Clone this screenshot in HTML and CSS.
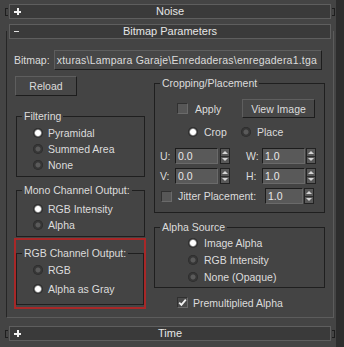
FILE: index.html
```html
<!DOCTYPE html>
<html lang="en">
<head>
    <meta charset="UTF-8">
    <meta name="viewport" content="width=device-width, initial-scale=1.0">
    <title>Bitmap Parameters</title>
    <link rel="stylesheet" href="styles.css">
</head>
<body>
    <div class="panel">
        <div class="rollup">
            <span class="bracket"></span>
            <div class="bar"><span class="sign plus"></span><span>Noise</span></div>
            <span class="bracket right"></span>
        </div>

        <div class="rollout">
            <div class="bar"><span class="sign minus"></span><span>Bitmap Parameters</span></div>
            <div class="frame">
                <div class="bitmap-row">
                    <span class="bitmap-label">Bitmap:</span>
                    <button class="btn path-btn"><span>xturas\Lampara Garaje\Enredaderas\enregadera1.tga</span></button>
                </div>

                <div class="columns">
                    <div class="col-left">
                        <button class="btn reload">Reload</button>

                        <fieldset class="group filtering">
                            <legend>Filtering</legend>
                            <label class="radio-row"><span class="radio on"></span>Pyramidal</label>
                            <label class="radio-row"><span class="radio"></span>Summed Area</label>
                            <label class="radio-row"><span class="radio"></span>None</label>
                        </fieldset>

                        <fieldset class="group mono">
                            <legend>Mono Channel Output:</legend>
                            <label class="radio-row"><span class="radio on"></span>RGB Intensity</label>
                            <label class="radio-row"><span class="radio"></span>Alpha</label>
                        </fieldset>

                        <div class="highlight">
                            <fieldset class="group rgb">
                                <legend>RGB Channel Output:</legend>
                                <label class="radio-row"><span class="radio"></span>RGB</label>
                                <label class="radio-row"><span class="radio on"></span>Alpha as Gray</label>
                            </fieldset>
                        </div>
                    </div>

                    <div class="col-right">
                        <fieldset class="group cropping">
                            <legend>Cropping/Placement</legend>
                            <div class="crop-row apply-row">
                                <label class="apply-label"><span class="check"></span>Apply</label>
                                <button class="btn view">View Image</button>
                            </div>
                            <div class="crop-row mode-row">
                                <label><span class="radio on"></span>Crop</label>
                                <label><span class="radio"></span>Place</label>
                            </div>
                            <div class="crop-row spin-row">
                                <span class="axis">U:</span>
                                <span class="field">0.0</span>
                                <span class="spin"><i class="up"></i><i class="down"></i></span>
                                <span class="axis wide">W:</span>
                                <span class="field">1.0</span>
                                <span class="spin tight"><i class="up"></i><i class="down"></i></span>
                            </div>
                            <div class="crop-row spin-row second">
                                <span class="axis">V:</span>
                                <span class="field">0.0</span>
                                <span class="spin"><i class="up"></i><i class="down"></i></span>
                                <span class="axis wide">H:</span>
                                <span class="field">1.0</span>
                                <span class="spin tight"><i class="up"></i><i class="down"></i></span>
                            </div>
                            <div class="crop-row jitter-row">
                                <span class="check"></span>
                                <span class="jitter-text">Jitter Placement:</span>
                                <span class="field short">1.0</span>
                                <span class="spin tight"><i class="up"></i><i class="down"></i></span>
                            </div>
                        </fieldset>

                        <fieldset class="group alpha">
                            <legend>Alpha Source</legend>
                            <label class="radio-row"><span class="radio on"></span>Image Alpha</label>
                            <label class="radio-row"><span class="radio"></span>RGB Intensity</label>
                            <label class="radio-row"><span class="radio"></span>None (Opaque)</label>
                        </fieldset>

                        <label class="premult">
                            <span class="check on">
                                <svg width="9" height="9" viewBox="0 0 9 9"><path d="M1.2 4.6 L3.4 6.9 L7.8 1.6" fill="none" stroke="#f2f2f2" stroke-width="1.8"/></svg>
                            </span>
                            Premultiplied Alpha
                        </label>
                    </div>
                </div>
            </div>
        </div>

        <div class="rollup time">
            <span class="bracket"></span>
            <div class="bar"><span class="sign plus"></span><span>Time</span></div>
            <span class="bracket right"></span>
        </div>
    </div>
    <div class="scrollbar"></div>
</body>
</html>
```

FILE: styles.css
```css
* {
    box-sizing: border-box;
}

body {
    margin: 0;
    width: 344px;
    height: 347px;
    overflow: hidden;
    display: flex;
    background: #444444;
    color: #dcdcdc;
    font-family: "Liberation Sans", Arial, sans-serif;
    font-size: 10.5px;
}

.panel {
    width: 336px;
    padding-top: 4px;
}

.scrollbar {
    width: 8px;
    background: #2d2d2d;
}

/* rollout headers */
.rollup {
    display: flex;
    align-items: center;
    padding-left: 5px;
}

.rollup.time {
    margin-top: 8px;
}

.bracket {
    width: 3px;
    height: 8px;
    margin-right: 1px;
    border: 1px solid #1e1e1e;
    border-right: none;
}

.bracket.right {
    margin: 0 0 0 1px;
    border: 1px solid #1e1e1e;
    border-left: none;
}

.bar {
    width: 322px;
    height: 15px;
    display: grid;
    grid-template-columns: 1fr auto 1fr;
    align-items: center;
    background: #3a3a3a;
    border: 1px solid #5e5e5e;
    color: #e6e6e6;
    font-size: 11px;
    line-height: 13px;
}

.sign {
    justify-self: start;
    margin-left: 4px;
}

.plus {
    width: 7px;
    height: 7px;
    background:
        linear-gradient(#f2f2f2, #f2f2f2) center / 7px 2px no-repeat,
        linear-gradient(#f2f2f2, #f2f2f2) center / 2px 7px no-repeat;
}

.minus {
    width: 5px;
    height: 1px;
    background: #e0e0e0;
}

.rollout {
    width: 328px;
    margin: 5px 0 0 6px;
}

.rollout .bar {
    width: auto;
    margin: 0 3px;
}

.frame {
    margin-top: -8px;
    padding: 8px 0;
    border: 1px solid #5c5c5c;
    border-top: none;
    border-left-color: #262626;
}

/* bitmap path */
.bitmap-row {
    display: flex;
    align-items: center;
    height: 20px;
    margin-top: 11px;
}

.bitmap-label {
    width: 47px;
    padding-left: 7px;
}

.btn {
    padding: 0;
    background: #474747;
    border: 1px solid;
    border-color: #5e5e5e #1d1d1d #1d1d1d #5e5e5e;
    color: #dcdcdc;
    font: inherit;
}

.path-btn {
    width: 268px;
    height: 20px;
    display: flex;
    justify-content: flex-end;
    align-items: center;
    overflow: hidden;
    padding-right: 4px;
    white-space: nowrap;
    letter-spacing: 0.2px;
}

.columns {
    display: flex;
    align-items: flex-start;
    margin-top: 6px;
}

.col-left {
    width: 132px;
    margin-left: 7px;
    display: flex;
    flex-direction: column;
}

.col-right {
    width: 171px;
    margin-left: 8px;
    display: flex;
    flex-direction: column;
}

.reload {
    width: 62px;
    height: 20px;
    margin-left: 1px;
}

/* group boxes */
.group {
    min-width: 0;
    margin: 0;
    padding: 0;
    border: 1px solid #1f1f1f;
}

.group legend {
    margin-left: 5px;
    padding: 0 2px;
    line-height: 13px;
}

.filtering {
    width: 129px;
    margin: 14px 0 0 2px;
    padding: 2px 0 3px;
}

.mono {
    width: 129px;
    margin: 7px 0 0 2px;
    padding: 4px 0 3px;
}

.highlight {
    width: 132px;
    margin-top: 1px;
    padding: 7px 0 2px;
    border: 2px solid #a82828;
}

.rgb {
    width: 128px;
    padding: 0 0 6px;
}

.cropping {
    width: 171px;
    margin-top: 1px;
    padding: 9px 0 8px;
}

.alpha {
    width: 171px;
    margin-top: 8px;
    padding: 0 0 2px;
}

/* radios and checks */
.radio-row {
    display: flex;
    align-items: center;
    height: 16px;
    padding-left: 16px;
}

.rgb .radio-row {
    height: 19px;
}

.alpha .radio-row {
    height: 17px;
    padding-left: 33px;
}

.radio {
    width: 10px;
    height: 10px;
    flex-shrink: 0;
    margin-right: 5px;
    border-radius: 50%;
    background: radial-gradient(circle, #5a5a5a 0 2px, #363636 3px 4px, #262626 5px);
}

.radio.on {
    background: radial-gradient(circle, #ffffff 0 2.5px, #c4c4c4 3px, #3a3a3a 4px, #262626 5px);
}

.col-right .radio {
    margin-right: 6px;
}

.check {
    width: 11px;
    height: 11px;
    flex-shrink: 0;
    display: flex;
    align-items: center;
    justify-content: center;
    background: #575757;
    border: 1px solid;
    border-color: #303030 #6a6a6a #6a6a6a #303030;
}

.check.on {
    background: #4a4a4a;
}

/* cropping rows */
.crop-row {
    display: flex;
    align-items: center;
}

.apply-row {
    height: 19px;
    padding-left: 22px;
}

.apply-label {
    width: 65px;
    display: flex;
    align-items: center;
}

.apply-label .check {
    margin-right: 7px;
}

.view {
    width: 73px;
    height: 19px;
}

.mode-row {
    height: 16px;
    margin-top: 6px;
    padding-left: 33px;
}

.mode-row label {
    width: 53px;
    display: flex;
    align-items: center;
}

.spin-row {
    height: 16px;
    margin-top: 8px;
    padding-left: 5px;
}

.spin-row.second {
    margin-top: 4px;
}

.axis {
    width: 15px;
}

.axis.wide {
    width: 16px;
    margin-left: 16px;
}

.field {
    width: 43px;
    height: 16px;
    padding-left: 2px;
    background: #595959;
    border: 1px solid;
    border-color: #1c1c1c #6a6a6a #6a6a6a #1c1c1c;
    color: #e8e8e8;
    line-height: 14px;
}

.field.short {
    width: 38px;
}

.spin {
    width: 10px;
    height: 16px;
    margin-left: 2px;
    display: flex;
    flex-direction: column;
    background: #585858;
    border: 1px solid #222222;
}

.spin.tight {
    margin-left: 1px;
}

.spin i {
    flex: 1;
    display: flex;
    align-items: center;
    justify-content: center;
}

.spin i::before {
    content: "";
    border-left: 3px solid transparent;
    border-right: 3px solid transparent;
}

.spin .up::before {
    border-bottom: 3px solid #d4d4d4;
}

.spin .down {
    border-top: 1px solid #2c2c2c;
}

.spin .down::before {
    border-top: 3px solid #d4d4d4;
}

.jitter-row {
    height: 16px;
    margin-top: 4px;
    padding-left: 6px;
}

.jitter-row .check {
    margin-right: 6px;
}

.jitter-text {
    width: 87px;
}

.premult {
    display: flex;
    align-items: center;
    height: 11px;
    margin-top: 9px;
    padding-left: 23px;
}

.premult .check {
    margin-right: 5px;
}
```
